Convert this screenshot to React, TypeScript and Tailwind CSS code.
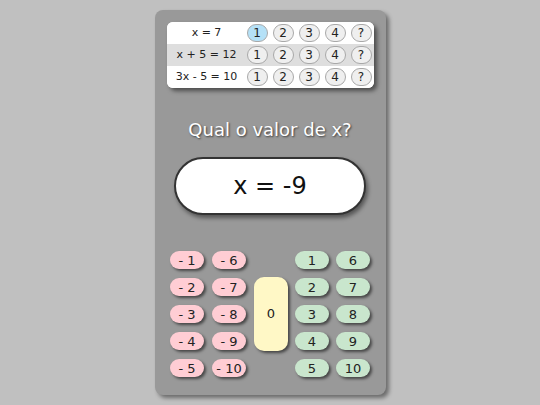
import React, { useState } from 'react';

const rows = [
  { label: 'x = 7', striped: false },
  { label: 'x + 5 = 12', striped: true },
  { label: '3x - 5 = 10', striped: false },
];

const choices = ['1', '2', '3', '4', '?'];

function PillButton({ label, color }: { label: string; color: string }) {
  return (
    <button
      className={`h-[18px] w-[34px] rounded-full text-[13px] leading-none text-[#222] shadow-[2px_2px_3px_rgba(0,0,0,0.55)] ${color}`}
    >
      {label}
    </button>
  );
}

export default function App() {
  const [selected] = useState<Record<number, string>>({ 0: '1' });

  return (
    <div
      className="min-h-[405px] w-full bg-[#c0c0c0] flex justify-center"
      style={{ fontFamily: '"DejaVu Sans", Verdana, sans-serif' }}
    >
      <div className="mt-[10px] w-[231px] h-[385px] rounded-[8px] bg-[#999999] shadow-[3px_3px_4px_rgba(0,0,0,0.45)] flex flex-col items-center pt-3">
        {/* Equation table */}
        <div className="w-[207px] rounded-[6px] bg-white overflow-hidden shadow-[3px_3px_4px_rgba(0,0,0,0.5)]">
          {rows.map((row, i) => (
            <div
              key={row.label}
              className={`h-[22px] flex items-center ${row.striped ? 'bg-[#dedede]' : 'bg-white'}`}
            >
              <div className="w-[80px] text-center text-[11px] text-[#222]">{row.label}</div>
              <div className="flex gap-[5px]">
                {choices.map((c) => (
                  <div
                    key={c}
                    className={`w-[21px] h-[18px] rounded-full border border-[#a8a8a8] flex items-center justify-center text-[12px] text-[#222] ${
                      selected[i] === c ? 'bg-[#b5e1f7]' : 'bg-[#efefef]'
                    }`}
                  >
                    {c}
                  </div>
                ))}
              </div>
            </div>
          ))}
        </div>

        {/* Question */}
        <div className="mt-[31px] text-[18px] leading-[22px] text-white [text-shadow:1px_1px_2px_rgba(0,0,0,0.6)]">
          Qual o valor de x?
        </div>

        {/* Answer */}
        <div className="mt-[16px] w-[192px] h-[58px] rounded-full border-2 border-[#333] bg-white flex items-center justify-center text-[24px] text-[#111] shadow-[2px_3px_4px_rgba(0,0,0,0.45)]">
          x = -9
        </div>

        {/* Keypad */}
        <div className="mt-[36px] flex items-center">
          <div className="grid grid-cols-2 gap-x-[8px] gap-y-[9px]">
            {[1, 6, 2, 7, 3, 8, 4, 9, 5, 10].map((n) => (
              <PillButton key={`m${n}`} label={`- ${n}`} color="bg-[#ffcdd4]" />
            ))}
          </div>
          <button className="ml-[8px] w-[34px] h-[74px] rounded-[10px] bg-[#fff8c6] text-[13px] text-[#222] shadow-[2px_2px_3px_rgba(0,0,0,0.55)]">
            0
          </button>
          <div className="ml-[7px] grid grid-cols-2 gap-x-[7px] gap-y-[9px]">
            {[1, 6, 2, 7, 3, 8, 4, 9, 5, 10].map((n) => (
              <PillButton key={`p${n}`} label={`${n}`} color="bg-[#c9e6cd]" />
            ))}
          </div>
        </div>
      </div>
    </div>
  );
}
